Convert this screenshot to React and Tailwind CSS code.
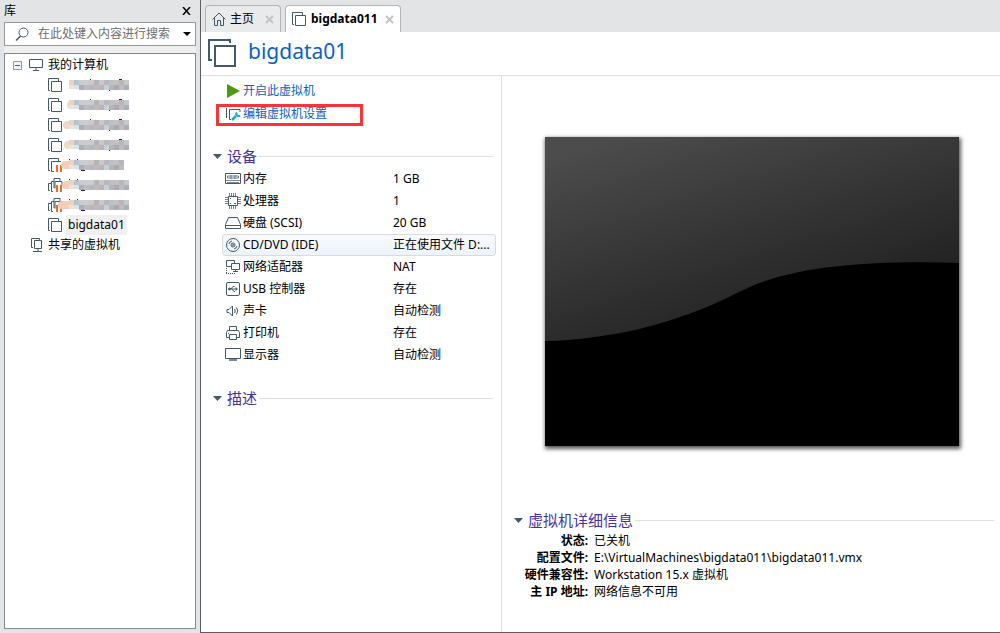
import { useState } from 'react';

const INK = '#455a68';

const MOSAIC_TOP = ['#e6d5c3', '#b9c3cd', '#ccccce', '#c9cdd3', '#d3c9c5', '#b2b5bb', '#cbc8c8', '#b9b8bf', '#bcc1c9', '#c6bfbd', '#b3b8be', '#c4c9ca', '#b9bbba'];
const MOSAIC_BOTTOM = ['#f0e2d5', '#d9e3ea', '#b0aeb5', '#babcc3', '#b3b9c2', '#c4b9b3', '#adb8c5', '#ccd0d5', '#b6b5bb', '#aaaab0', '#bfbbbf', '#aab0b7', '#c5c7c4'];

const HIDDEN_VMS = [
  { id: 1, state: 'off', cells: 12 },
  { id: 2, state: 'off', cells: 12, offset: -1 },
  { id: 3, state: 'off', cells: 12, offset: -5 },
  { id: 4, state: 'off', cells: 12, offset: -4 },
  { id: 5, state: 'paused', cells: 11, offset: -7 },
  { id: 6, state: 'team', cells: 12, offset: -6 },
  { id: 7, state: 'team', cells: 12, offset: -10 },
];

const DEVICES = [
  { id: 'memory', name: '内存', value: '1 GB' },
  { id: 'cpu', name: '处理器', value: '1' },
  { id: 'disk', name: '硬盘 (SCSI)', value: '20 GB' },
  { id: 'cd', name: 'CD/DVD (IDE)', value: '正在使用文件 D:...' },
  { id: 'network', name: '网络适配器', value: 'NAT' },
  { id: 'usb', name: 'USB 控制器', value: '存在' },
  { id: 'sound', name: '声卡', value: '自动检测' },
  { id: 'printer', name: '打印机', value: '存在' },
  { id: 'display', name: '显示器', value: '自动检测' },
];

const DETAILS = [
  { label: '状态:', value: '已关机' },
  { label: '配置文件:', value: 'E:\\VirtualMachines\\bigdata011\\bigdata011.vmx' },
  { label: '硬件兼容性:', value: 'Workstation 15.x 虚拟机' },
  { label: '主 IP 地址:', value: '网络信息不可用' },
];

function Svg({ w = 16, h = 16, children, className = '' }) {
  return (
    <svg width={w} height={h} viewBox={`0 0 ${w} ${h}`} fill="none" stroke={INK}
      aria-hidden="true" className={`shrink-0 ${className}`}>
      {children}
    </svg>
  );
}

function VmIcon({ state = 'off' }) {
  return (
    <Svg w={15} h={15}>
      {state === 'team' ? (
        <>
          <path d="M2 12.5H.5V5.5H3M5 13.5H3.5V3.5H6M6 10V.5h6v3" />
          <path d="M7 10.5V3.5h7V8" />
        </>
      ) : (
        <>
          <path d="M2 12.5H.5V.5h10V3" />
          {state === 'off' ? <path d="M3.5 3.5h10v10h-10z" /> : <path d="M6 13.5H3.5V3.5H13" />}
        </>
      )}
      {state !== 'off' && <path d="M9 7v7M13 7v7" stroke="#f26b21" strokeWidth="2" />}
    </Svg>
  );
}

function VmIconLarge() {
  return (
    <Svg w={28} h={28} className="mt-1">
      <path d="M4 21H1V1h21v3" strokeWidth="2" />
      <path d="M7 7h20v20H7z" strokeWidth="2" />
    </Svg>
  );
}

function Mosaic({ cells, offset = 0, state }) {
  return (
    <svg width="62" height="14" viewBox="0 0 62 14" overflow="visible" role="img" aria-label="虚拟机">
      {offset < 0 && (
        <rect x={offset} y="3" width={6 - offset} height="8" rx="4" fill={state === 'off' ? '#ecd9cb' : '#f5ccb5'} />
      )}
      {state === 'off'
        ? <path d="M22 1h1v2h-1zM41 11h1v2h-1zM51 1h3v1h-3z" fill="#222" />
        : <path d="M1 1h1v2H1zM9 1h1v2H9zM13 12h4v1h-4z" fill="#222" />}
      {MOSAIC_TOP.slice(0, cells).map((c, i) => (
        <rect key={`t${i}`} x={i * 5 + 1} y="2" width="5" height="5" fill={c} />
      ))}
      {MOSAIC_BOTTOM.slice(0, cells).map((c, i) => (
        <rect key={`b${i}`} x={i * 5 + 1} y="7" width="5" height={i > 1 ? 5 : 4} fill={c} />
      ))}
    </svg>
  );
}

function DeviceIcon({ id }) {
  switch (id) {
    case 'memory':
      return (
        <Svg>
          <path d="M.5 2.5h15v10H.5z" />
          <path d="M2.5 5h11v2h-11z" opacity=".8" />
          <path d="M6 4v4M10 4v4M1 9.5h14M2 11.5h12" opacity=".7" />
        </Svg>
      );
    case 'cpu':
      return (
        <Svg>
          <path d="M3.5 3.5h9v9h-9z" />
          <path d="M4.5 0v3M6.5 0v3M8.5 0v3M10.5 0v3M4.5 13v3M6.5 13v3M8.5 13v3M10.5 13v3M0 4.5h3M0 6.5h3M0 8.5h3M0 10.5h3M13 4.5h3M13 6.5h3M13 8.5h3M13 10.5h3" opacity=".75" />
          <path d="M5 5.5h1M9 10.5h2M5 10.5h1" />
        </Svg>
      );
    case 'disk':
      return (
        <Svg>
          <path d="M3.5 2.5h9l3 7v4H.5v-4zM.5 10.5h15" />
        </Svg>
      );
    case 'cd':
      return (
        <Svg>
          <circle cx="8" cy="8" r="6.5" />
          <circle cx="8" cy="8" r="2" />
          <circle cx="8" cy="8" r=".5" />
          <path d="M4 7a4 4 0 0 1 3-3M12 9a4 4 0 0 1-3 3" />
        </Svg>
      );
    case 'network':
      return (
        <Svg>
          <path d="M1.5 1.5h8v6h-8z" />
          <path d="M6.5 4.5h8v6h-8z" fill="#fff" />
          <path d="M8 12.5h5M10.5 11v1" />
          <path d="M1.5 9v6M1 14.5h9" strokeDasharray="1 1" />
        </Svg>
      );
    case 'usb':
      return (
        <Svg>
          <rect x="1.5" y="1.5" width="13" height="13" rx="1.5" />
          <path d="M4 8h8M6 8l2-2.5h1.5M7 8l2 2.5h1" />
          <circle cx="4.5" cy="8" r="1" fill={INK} />
          <path d="M11 6.5 12.5 8 11 9.5z" fill={INK} strokeWidth=".5" />
        </Svg>
      );
    case 'sound':
      return (
        <Svg>
          <path d="M2 6.5h2L7.5 3v10L4 9.5H2z" />
          <path d="M9.5 6q1.5 2 0 4M11.5 4.5q2.5 3.5 0 7" />
        </Svg>
      );
    case 'printer':
      return (
        <Svg>
          <path d="M4.5 5.5v-4h7v4M4 12.5H1.5v-5l1-2h11l1 2v5H12" />
          <path d="M4.5 9.5h7v5h-7zM3 8.5h1" />
        </Svg>
      );
    default:
      return (
        <Svg>
          <path d="M.5 1.5h15v10H.5z" />
          <path d="M4 13h8" strokeWidth="2" opacity=".7" />
        </Svg>
      );
  }
}

function SectionTitle({ children }) {
  return (
    <div className="flex items-center">
      <button type="button" className="flex items-center gap-1 text-[15px] leading-5 text-[#4533a0]">
        <Svg w={11} h={5}>
          <path d="M1 0h9L5.5 5z" fill={INK} stroke="none" />
        </Svg>
        {children}
      </button>
      <span className="ml-0.5 h-px flex-1 bg-[#dfdfdf]" />
    </div>
  );
}

function Sidebar() {
  return (
    <aside className="flex w-[200px] shrink-0 flex-col px-1 pb-1">
      <div className="flex h-[22px] items-center justify-between pr-1">
        <h2>库</h2>
        <button type="button" aria-label="关闭">
          <Svg w={10} h={8}>
            <path d="M1 0l7 8M8 0L1 8" stroke="#000" strokeWidth="1.5" />
          </Svg>
        </button>
      </div>
      <div className="flex h-6 items-center border border-[#979797] bg-white pr-1">
        <Svg w={14} h={14} className="ml-2.5">
          <circle cx="8.5" cy="5.5" r="4.5" />
          <path d="M5.5 9 1 13.5" strokeWidth="1.5" />
        </Svg>
        <input type="text" aria-label="搜索" placeholder="在此处键入内容进行搜索"
          className="ml-2 min-w-0 flex-1 pl-px outline-none placeholder:text-[#6d6d6d]" />
        <button type="button" aria-label="搜索选项">
          <Svg w={8} h={4}>
            <path d="M0 0h8L4 4z" fill="#000" stroke="none" />
          </Svg>
        </button>
      </div>
      <div className="h-[7px] bg-[#efefef]" />
      <ul className="flex-1 border border-[#828790] bg-white pl-2 pt-px">
        <li>
          <div className="flex h-5 items-center">
            <button type="button" aria-label="折叠">
              <Svg w={9} h={9}>
                <path d="M.5.5h8v8h-8z" stroke="#989898" fill="#f6f6f6" />
                <path d="M2 4.5h5" stroke="#3a55a5" />
              </Svg>
            </button>
            <Svg w={15} h={12} className="ml-[7px]">
              <path d="M.5.5h13v8H.5zM7 9v2M4 11.5h6" />
            </Svg>
            <span className="ml-1">我的计算机</span>
          </div>
          <ul className="pl-[35px]">
            {HIDDEN_VMS.map(vm => (
              <li key={vm.id} className="flex h-5 items-center gap-[5px]">
                <VmIcon state={vm.state} />
                <Mosaic cells={vm.cells} offset={vm.offset} state={vm.state} />
              </li>
            ))}
            <li className="flex h-5 items-center gap-[3px]">
              <VmIcon />
              <button type="button" className="h-5 bg-[#f0f0f0] px-0.5">bigdata01</button>
            </li>
          </ul>
        </li>
        <li className="flex h-5 items-center pl-[18px]">
          <Svg w={13} h={14}>
            <path d="M2 9.5H.5v-9h8V2M3.5 2.5h7v8h-7zM7 11v2M2 13.5h9" />
          </Svg>
          <span className="ml-1">共享的虚拟机</span>
        </li>
      </ul>
    </aside>
  );
}

function Tab({ icon, label, active }) {
  return (
    <div className={active
      ? 'flex items-center gap-[7px] rounded-t border border-b-0 border-[#b4b4b4] bg-white px-[6px] font-bold'
      : 'flex items-center gap-[11px] rounded-t border border-b-0 border-[#b4b4b4] bg-[#e9eaeb] px-[6px]'}>
      <button type="button" role="tab" aria-selected={!!active} className="flex items-center gap-1">
        {icon}
        {label}
      </button>
      <button type="button" aria-label={`关闭 ${label}`}>
        <Svg w={9} h={9}>
          <path d="M1 1l7 7M8 1L1 8" stroke="#c3c3c3" strokeWidth="2" />
        </Svg>
      </button>
    </div>
  );
}

function DeviceList() {
  const [selected, setSelected] = useState('cd');
  return (
    <ul className="pl-[10px]">
      {DEVICES.map(d => (
        <li key={d.id}>
          <button
            type="button"
            onClick={() => setSelected(d.id)}
            className={selected === d.id
              ? 'flex h-[22px] w-full items-center rounded-[3px] border border-[#d9dbde] bg-linear-to-b from-[#f8fafd] to-[#edf3fc] pl-0.5 text-left'
              : 'flex h-[22px] w-full items-center rounded-[3px] border border-transparent pl-0.5 text-left'}
          >
            <DeviceIcon id={d.id} />
            <span className="ml-0.5 w-[150px] shrink-0">{d.name}</span>
            <span className="truncate">{d.value}</span>
          </button>
        </li>
      ))}
    </ul>
  );
}

function Screen() {
  return (
    <svg viewBox="0 0 414 309" role="img" aria-label="屏幕预览"
      className="block w-full bg-black shadow-[1px_2px_4px_1px_rgba(0,0,0,0.65)]">
      <defs>
        <linearGradient id="glow" gradientUnits="userSpaceOnUse" x1="40" y1="10" x2="112" y2="240">
          <stop offset="0" stopColor="#4c4c4c" />
          <stop offset="1" stopColor="#1f1f1f" />
        </linearGradient>
      </defs>
      <path d="M0 0h414v126C320 123 240 130 192 156C130 188 60 203 0 204z" fill="url(#glow)" />
    </svg>
  );
}

export default function App() {
  return (
    <div className="flex min-h-screen bg-[#e3e4e6] font-['Noto_Sans','Noto_Sans_CJK_SC',sans-serif] text-[12px] leading-4 text-black">
      <Sidebar />
      <main className="flex min-w-0 flex-1 flex-col border-b border-l border-[#5c5f62] bg-white">
        <div role="tablist" className="flex h-8 gap-1 bg-[#e3e4e6] pl-1 pt-[5px]">
          <Tab
            label="主页"
            icon={
              <Svg w={14} h={14}>
                <path d="M.5 7.5 7 1l6.5 6.5M2.5 6v7.5h3v-5h3v5h3V6" />
              </Svg>
            }
          />
          <Tab label="bigdata011" icon={<VmIcon />} active />
        </div>

        <header className="flex h-11 items-start gap-3 border-b border-[#dfdfdf] pl-[7px] pt-[3px]">
          <VmIconLarge />
          <h1 className="text-[21px] leading-8 text-[#0b62c4]">bigdata01</h1>
        </header>

        <div className="flex flex-1">
          <section className="flex w-[301px] shrink-0 flex-col border-r border-[#dfdfdf] pr-[5px]">
            <div className="pl-[15px] pt-[7px] text-[#0b62c4]">
              <a href="#start" className="flex h-[21px] items-center gap-[3px] pb-[5px] pl-[11px]">
                <Svg w={13} h={14}>
                  <path d="M0 0l13 7L0 14z" fill="#4a9a12" stroke="none" />
                </Svg>
                开启此虚拟机
              </a>
              <a href="#settings" className="flex h-[22px] w-[147px] items-center gap-0.5 border-3 border-[#f7343a] pb-0.5 pl-[7px]">
                <Svg w={15} h={14}>
                  <path d="M.5 1v10M5 12.5H3.5v-10H14V5" />
                  <path d="M6 13l4-4" stroke="#1fa9d6" strokeWidth="2.5" />
                  <path d="M11 5.5a2 2 0 1 0 3 3" stroke="#1fa9d6" strokeWidth="2" />
                </Svg>
                编辑虚拟机设置
              </a>
            </div>

            <div className="mt-5 pl-[11px]">
              <div className="pr-[3px]">
                <SectionTitle>设备</SectionTitle>
              </div>
              <div className="mt-0.5"><DeviceList /></div>
              <div className="mt-[22px] pr-[3px]">
                <SectionTitle>描述</SectionTitle>
              </div>
            </div>
          </section>

          <section className="flex min-w-0 flex-1 flex-col">
            <div className="pl-[43px] pr-[41px] pt-[61px]">
              <Screen />
            </div>
            <div className="mt-16 pl-[11px] pr-[6px]">
              <SectionTitle>虚拟机详细信息</SectionTitle>
              <dl className="mt-0.5">
                {DETAILS.map(d => (
                  <div key={d.label} className="flex h-[17px] items-center gap-[6px]">
                    <dt className="w-[75px] shrink-0 text-right font-bold">{d.label}</dt>
                    <dd className="truncate">{d.value}</dd>
                  </div>
                ))}
              </dl>
            </div>
          </section>
        </div>
      </main>
    </div>
  );
}
